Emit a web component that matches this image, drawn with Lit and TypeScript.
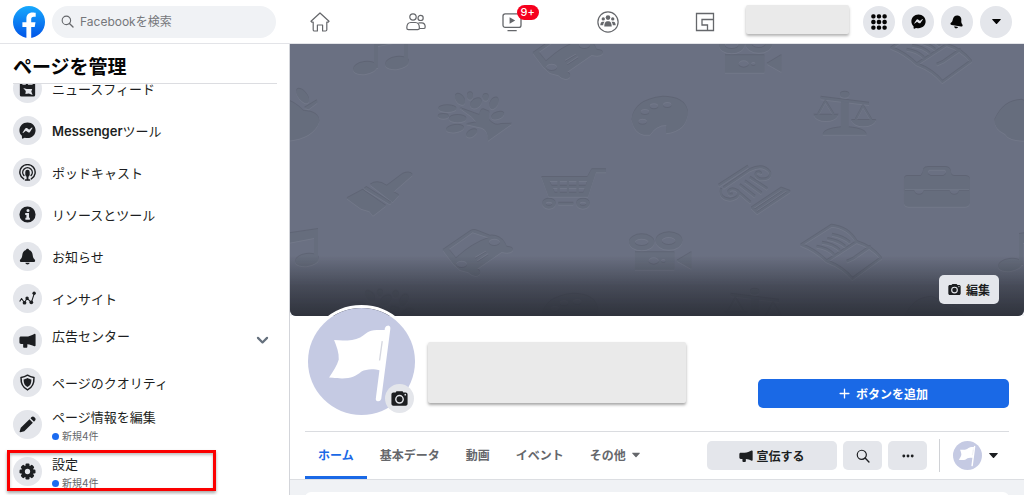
import { LitElement, html, svg, css, TemplateResult, SVGTemplateResult } from "lit";
import { customElement, property } from "lit/decorators.js";

/* Glyphs drawn on a 20 x 20 grid. */
const glyphs: Record<string, SVGTemplateResult> = {
  feed: svg`<path fill="currentColor" fill-rule="evenodd" d="M3 0h14a2 2 0 0 1 2 2v15.500a2 2 0 0 1-2 2H3a2 2 0 0 1-2-2V2a2 2 0 0 1 2-2zM4 2.500v3h4v-3zM10.500 2.500v3h5.500v-3zM5 9.500l4 1h6.500l-1 3 1.500 4-4.500-1.500-4 .5.5-3.500z"/>`,
  messenger: svg`<path fill="currentColor" fill-rule="evenodd" d="M10 .5C4.500.5.5 4.500.5 9.700c0 2.700 1.100 5 2.900 6.600l.1 2.600c0 .5.5.8 1 .6l2.200-1c1 .3 2.100.4 3.300.4 5.500 0 9.500-4 9.500-9.200S15.500.5 10 .5zM4.300 12.300l3-4.700c.5-.7 1.400-.9 2.100-.4l2.200 1.700c.2.1.4.1.6 0l3-2.300c.4-.3.9.2.6.6l-2.900 4.600c-.5.7-1.500.9-2.200.4l-2.300-1.700c-.2-.1-.4-.1-.6 0l-3 2.300c-.3.3-.8-.1-.5-.5z"/>`,
  podcast: svg`<g fill="none" stroke="currentColor" stroke-width="1.700" stroke-linecap="round"><path d="M5.500 17.500a9 9 0 1 1 9 0"/><path d="M5.800 13.600a5.600 5.600 0 1 1 8.400 0"/></g><rect x="7.400" y="6.800" width="5.200" height="8.200" rx="2.600" fill="currentColor"/><rect x="8.900" y="13" width="2.200" height="6" fill="currentColor"/><rect x="6.800" y="18" width="6.400" height="1.600" rx=".6" fill="currentColor"/>`,
  info: svg`<path fill="currentColor" fill-rule="evenodd" d="M10 .5a9.500 9.500 0 1 0 0 19 9.500 9.500 0 0 0 0-19zM10.600 3.400a1.800 1.800 0 1 1 0 3.600 1.800 1.800 0 0 1 0-3.600zM7.300 8.300h4.500v5.500h1v2.400H7.500v-2.400h1.200v-3.200H7.300z"/>`,
  bell: svg`<path fill="currentColor" d="M10 .8c1 0 1.800.7 1.900 1.500 2.800.9 4 3.400 4.200 6 .2 2.300.8 3.700 2.100 5 1.500 1.500.8 3.200-1.200 3.200H3c-2 0-2.700-1.700-1.200-3.200 1.300-1.300 1.900-2.700 2.100-5 .2-2.600 1.400-5.100 4.200-6C8.200 1.500 9 .8 10 .8zM7.500 17.400h5c-.2 1.200-1.200 2-2.500 2s-2.300-.8-2.500-2z"/>`,
  insight: svg`<path d="M.8 13.500 3 10 6.500 15 9.500 9.500l5 5.300L18 4" fill="none" stroke="currentColor" stroke-width="1.300" stroke-linejoin="round"/><g fill="currentColor"><circle cx="6.500" cy="15" r="2.200"/><circle cx="9.500" cy="9.500" r="2"/><circle cx="14.500" cy="14.500" r="2.200"/><circle cx="17.800" cy="3.800" r="2"/></g>`,
  horn: svg`<path fill="currentColor" d="M18 2.300c.8-.3 1.500.1 1.500.9v12.600c0 .8-.7 1.200-1.500.9-3-1.300-5-2.200-8.200-2.400v3c0 .8-.5 1.300-1.200 1.300H6.100c-.7 0-1.200-.5-1.200-1.300v-3.100H2.500c-1.200 0-2-.8-2-2V7.400c0-1.200.8-2 2-2H8c4 0 6.600-1.500 10-3.100z"/>`,
  shield: svg`<path d="M10 1.400c2.400 1.500 4.700 2.300 7.600 2.600.3 7.200-1.600 11.900-7.600 14.700C4 15.900 2.100 11.200 2.400 4c2.900-.3 5.200-1.100 7.600-2.600z" fill="none" stroke="currentColor" stroke-width="1.800" stroke-linejoin="round"/><path fill="currentColor" d="M10 4.800c1.500.9 2.800 1.300 4.600 1.600 0 4.500-1.100 7.100-4.600 9-3.500-1.900-4.600-4.500-4.600-9 1.800-.3 3.100-.7 4.600-1.600z"/>`,
  pencil: svg`<path fill="currentColor" d="M12.300 3.800l4 4L6.200 17.900 1.600 19.200c-.6.100-1-.3-.9-.9l1.400-4.400zM13.500 2.600l1.300-1.300c.9-.9 2.200-.9 3 0l1.100 1.100c.9.900.8 2.100 0 3l-1.300 1.300z"/>`,
  gear: svg`<g fill="currentColor"><rect x="7.600" y=".6" width="4.800" height="18.800" rx="1.400"/><rect x="7.600" y=".6" width="4.800" height="18.800" rx="1.400" transform="rotate(45 10 10)"/><rect x="7.600" y=".6" width="4.800" height="18.800" rx="1.400" transform="rotate(90 10 10)"/><rect x="7.600" y=".6" width="4.800" height="18.800" rx="1.400" transform="rotate(135 10 10)"/><circle cx="10" cy="10" r="7.200"/></g><circle cx="10" cy="10" r="3.100" fill="#e4e6eb"/>`,
  camera: svg`<path fill="currentColor" fill-rule="evenodd" d="M7.300 1.500h5.400c1 0 1.400.4 1.800 1.400h2.700c1.300 0 2.300 1 2.300 2.300v11c0 1.300-1 2.300-2.300 2.300H2.800C1.500 18.500.5 17.500.5 16.200v-11c0-1.300 1-2.300 2.300-2.300h2.700c.4-1 .8-1.400 1.800-1.400zM10 5.700a5.200 5.200 0 1 0 0 10.400 5.200 5.200 0 0 0 0-10.400zm6.800-1.200a1 1 0 1 0 0 2 1 1 0 0 0 0-2z"/><circle cx="10" cy="10.900" r="3.500" fill="currentColor"/>`,
  lens: svg`<circle cx="8.300" cy="8.300" r="6.500" fill="none" stroke="currentColor" stroke-width="1.700"/><path d="M13 13l5.500 5.500" stroke="currentColor" stroke-width="2" stroke-linecap="round"/>`,
  dots: svg`<g fill="currentColor"><circle cx="3" cy="10" r="2.400"/><circle cx="10" cy="10" r="2.400"/><circle cx="17" cy="10" r="2.400"/></g>`,
  caret: svg`<path fill="currentColor" d="M1.500 4.500h17c1 0 1.400 1 .7 1.800l-8 8.600c-.7.8-1.700.8-2.400 0l-8-8.600C.1 5.500.5 4.500 1.500 4.500z"/>`,
  chevron: svg`<path d="M3 6l7 7 7-7" fill="none" stroke="currentColor" stroke-width="3.400" stroke-linecap="round" stroke-linejoin="round"/>`,
  plus: svg`<path d="M10 2v16M2 10h16" stroke="currentColor" stroke-width="2.400" stroke-linecap="round"/>`,
  grid: svg`<g fill="currentColor">${[3, 10, 17].map((y) => [3, 10, 17].map((x) => svg`<rect x=${x - 2.7} y=${y - 2.7} width="5.400" height="5.400" rx="2.200"/>`))}</g>`,
  tiltbell: svg`<g transform="rotate(10 10 10)"><path fill="currentColor" d="M9.500.6c4 0 6 2.900 6.200 6.200.2 2.300.6 3.600 2.200 5.200 1.600 1.700.9 3.400-1.100 3.400H3.200c-2 0-2.700-1.700-1.200-3.200 1.300-1.300 1.400-2.800 1.500-5C3.700 3.500 5.700.6 9.500.6zM7.200 16.600h5.600c-.3 1.500-1.400 2.600-2.800 2.600s-2.500-1.100-2.800-2.600z"/></g>`,
  home: svg`<path d="M1 9.300 10 1l9 8.300-.8.9h-1.400v7.600c0 .6-.5 1.200-1.200 1.200h-3v-6H7.400v6h-3c-.7 0-1.200-.6-1.200-1.200v-7.600H1.800z" fill="none" stroke="currentColor" stroke-width="1.200" stroke-linejoin="round"/>`,
  people: svg`<g fill="none" stroke="currentColor" stroke-width="1.200" stroke-linejoin="round"><circle cx="7" cy="5" r="3.200"/><circle cx="14.600" cy="5.900" r="2.600"/><path d="M.8 16c0-3.600 1.800-5.500 4-5.500h4.600c2.300 0 4 1.900 4 5.500 0 1-.6 1.700-1.700 1.700H2.500C1.400 17.700.8 17 .8 16z"/><path d="M12.500 10.800h3.200c2 0 3.500 1.600 3.500 4.100 0 1-.6 1.600-1.600 1.600h-4.300"/></g>`,
  watch: svg`<rect x="1" y="1.800" width="18" height="13.600" rx="2.200" fill="none" stroke="currentColor" stroke-width="1.300"/><path fill="currentColor" d="M7.600 5.200l5.600 3.300-5.600 3.300zM5.500 18h9.200v1.200H5.500z"/>`,
  groups: svg`<circle cx="10" cy="10" r="9.200" fill="none" stroke="currentColor" stroke-width="1.100"/><g fill="currentColor"><circle cx="10" cy="6" r="2.100"/><circle cx="5.700" cy="7.200" r="1.500"/><circle cx="14.300" cy="7.200" r="1.500"/><path d="M6.600 14.200c0-3 1-4.900 2.400-4.900h2c1.400 0 2.400 1.900 2.400 4.900zM3 13c0-2 .8-3.300 2-3.300h1.800C6 10.800 5.700 12 5.600 13zM17 13c0-2-.8-3.300-2-3.300h-1.800c.8 1.100 1.100 2.300 1.200 3.300z"/></g>`,
  gaming: svg`<path d="M1.500 1.500h17v17h-17zM18.500 7.500H7v5.500h5.500v5.500" fill="none" stroke="currentColor" stroke-width="1.300"/>`,
};

const icon = (name: string, size: number): TemplateResult =>
  html`<svg class="icon" viewBox="0 0 20 20" width=${size} height=${size} aria-hidden="true">${glyphs[name]}</svg>`;

const flag = (): TemplateResult => html`<svg class="flag" viewBox="0 0 320 320" aria-hidden="true">
  <circle cx="160" cy="160" r="160" fill="#c5cae3"></circle>
  <g fill="#fff">
    <path d="M78 96c30 2 56 2 78-8 18-10 24-24 56-22h20l-14 122c-26-8-44-4-58 2-24 20-40 24-97 18 12-18 24-36 29-54 1-20-6-38-14-58z"></path>
    <path d="M230 60q2-8 10-8 8 2 6 12l-27 208q-3 8-10 7-8-2-6-10z"></path>
  </g>
  <path d="M222 99l-8 58" stroke="#d5d7e0" stroke-width="4"></path>
</svg>`;

/* Embossed motifs of the default cover. */
const upperMotifs = () => svg`
  <g>
    <path d="M84-7L118-12V20h-4V-3L88 2v22h-4z"/>
    <ellipse cx="75" cy="24" rx="12" ry="6" transform="rotate(-8 75 24)"/>
    <ellipse cx="107" cy="19" rx="12" ry="6" transform="rotate(-8 107 19)"/>
  </g>
  <g transform="translate(90 -201) scale(.3333)">
    <path fill-rule="evenodd" d="M458 630L540 574Q550 568 562 572L600 587Q630 585 645 610L650 620Q672 622 668 632 660 642 635 636L560 688Q576 694 568 704 553 714 535 697L510 690 490 672zM476 628L498 655Q545 610 598 593L548 577zM498 673a17 11 0 1 0 34 0a17 11 0 1 0-34 0M596 607a17 11 0 1 0 34 0a17 11 0 1 0-34 0M553 652L587 632 590 636 556 656zM560 662L594 640 597 644 563 666z"/>
  </g>
  <g transform="translate(370 -4) scale(.3333)">
    <path fill-rule="evenodd" d="M195 46H313V98H195zM235 72a16 11 0 1 0 32 0a16 11 0 1 0-32 0M273 72a7 6 0 1 0 14 0a7 6 0 1 0-14 0M320 71L364 45V96zM177 16a38 24 0 1 0 76 0a38 24 0 1 0-76 0M194 16a21 11 0 1 0 42 0a21 11 0 1 0-42 0M257 12a40 26 0 1 0 80 0a40 26 0 1 0-80 0M275 12a21 12 0 1 0 42 0a21 12 0 1 0-42 0"/>
  </g>
  <g transform="translate(460 -201) scale(.3333)" fill="none" stroke="#666d7d" stroke-width="6" stroke-linejoin="round">
    <path d="M424 615L515 557Q565 562 590 606L500 664Q465 630 424 615zM590 606Q635 620 663 655L577 717Q548 682 500 664M470 620Q505 625 522 645M486 608Q520 612 540 632M502 597Q535 602 556 620M516 584Q550 590 570 608M560 665L580 656 632 620"/>
  </g>
  <g transform="translate(0 -4) scale(.3333)">
    <path d="M508 203L568 225Q570 208 580 208L598 215 597 240Q615 260 633 252L666 251 594 302Q595 270 575 263L528 253 560 247 545 230z"/>
    <ellipse cx="472" cy="206" rx="27" ry="10"/><ellipse cx="460" cy="229" rx="16" ry="7"/>
    <ellipse cx="503" cy="236" rx="26" ry="11"/><ellipse cx="495" cy="266" rx="27" ry="11" transform="rotate(-8 495 266)"/>
    <ellipse cx="545" cy="280" rx="18" ry="10" transform="rotate(-30 545 280)"/><ellipse cx="510" cy="178" rx="12" ry="19" transform="rotate(-40 510 178)"/>
    <ellipse cx="540" cy="168" rx="9" ry="11"/><ellipse cx="558" cy="190" rx="19" ry="13" transform="rotate(-35 558 190)"/>
    <ellipse cx="587" cy="172" rx="9" ry="10"/><ellipse cx="612" cy="190" rx="12" ry="19" transform="rotate(30 612 190)"/>
    <ellipse cx="623" cy="227" rx="20" ry="10" transform="rotate(-20 623 227)"/>
    <path fill-rule="evenodd" d="M1194 215Q1185 170 1118 170 1030 180 1025 240 1035 290 1080 284 1098 255 1130 255L1128 280Q1192 272 1194 215zM1052 216a13 9 0 1 0 26 0a13 9 0 1 0-26 0M1079 199a13 9 0 1 0 26 0a13 9 0 1 0-26 0M1045 245a13 9 0 1 0 26 0a13 9 0 1 0-26 0M1119 195a13 9 0 1 0 26 0a13 9 0 1 0-26 0"/>
  </g>
  <g transform="translate(370 -4) scale(.3333)">
    <path d="M543 180H566V262Q615 266 620 284H488Q494 266 543 262z"/>
    <ellipse cx="554" cy="164" rx="14" ry="9"/>
    <path d="M482 170L627 188V195L482 178z"/>
    <path d="M460 224H536Q526 243 497 243 470 243 460 224zM573 240H649Q639 259 610 259 583 259 573 240z"/>
    <path d="M474 224L496 184 521 224M587 240L609 198 634 240" fill="none" stroke="#666d7d" stroke-width="5"/>
  </g>`;

const apple = (dx: number) => svg`
  <g transform="translate(${dx} -4) scale(.3333)">
    <path d="M-92 240Q-65 180-10 179 20 190 40 212 88 215 88 245 70 295-8 302-50 300-60 282-92 268-92 240z"/>
    <ellipse cx="38" cy="168" rx="13" ry="26" transform="rotate(-40 38 168)"/>
    <path d="M42 204L80 181 82 188 56 208z"/>
  </g>`;

const coverArt = (): TemplateResult => html`<svg class="art" viewBox="0 0 734 272" preserveAspectRatio="xMidYMid slice" aria-hidden="true">
  ${svg`<g class="emboss" fill="#666d7d">
    ${upperMotifs()}${apple(0)}${apple(735)}
    <g transform="translate(-90 197)">${upperMotifs()}${apple(735)}</g>
    <g transform="translate(645 197)"><path d="M84-7L118-12V20h-4V-3L88 2v22h-4z"/><ellipse cx="75" cy="24" rx="12" ry="6" transform="rotate(-8 75 24)"/></g>
    <g transform="translate(0 -4) scale(.3333)">
      <path d="M240 434Q262 418 290 437L338 401Q362 392 368 405L310 456 327 466 308 487zM229 441L305 488 299 493 222 446zM170 475L218 449 288 497 249 527 238 514 213 506 188 488z"/>
      <path fill-rule="evenodd" d="M754 411H892L905 388H948V397H918L894 470H776zM778 423L785 437H803V423zM809 423V437H831V423zM837 423V437H860V423zM866 423V437H887L892 423zM788 444L794 458H803V444zM809 444V458H831V444zM837 444V458H860V444zM866 444V458H880L885 444zM757 491a20 15 0 1 0 40 0a20 15 0 1 0-40 0M767 491a10 6 0 1 0 20 0a10 6 0 1 0-20 0M859 491a20 15 0 1 0 40 0a20 15 0 1 0-40 0M869 491a10 6 0 1 0 20 0a10 6 0 1 0-20 0M805 488H850V494H805z"/>
    </g>
    <g transform="translate(370 -4) scale(.3333)">
      <path fill="none" stroke="#666d7d" stroke-width="6" stroke-linejoin="round" d="M176 437L264 380M184 447Q175 475 210 479 240 475 235 455 215 440 205 455 205 467 218 463M190 444L270 390Q310 370 330 398 335 420 300 418 280 408 290 398 300 395 304 402M240 435L285 470M255 424L305 460M270 413L322 447M230 452L272 488M276 504L364 446 388 455 292 519zM284 512L376 450"/>
      <path fill-rule="evenodd" d="M742 408H782Q790 400 790 388 794 381 805 381H855Q870 382 872 392 872 408 884 408H918Q930 410 930 420V488Q928 500 915 500H745Q732 498 732 488V420Q732 408 742 408zM808 389Q802 392 803 402L812 408H850L858 402Q860 392 854 389zM734 448V453H763Q765 464 777 464 790 464 791 453H869Q871 464 883 464 895 464 897 453H927V448z"/>
    </g>
  </g>`}
</svg>`;

const base = css`
  *, *::before, *::after { box-sizing: border-box; }
  :host { display: block; font-family: Inter, "Noto Sans CJK JP", sans-serif; color: #1c1e21; }
  svg { display: block; flex: none; }
  button { font: inherit; color: inherit; border: 0; padding: 0; margin: 0; cursor: pointer; }
  a { color: inherit; text-decoration: none; }
  .round { display: flex; align-items: center; justify-content: center; flex: none; border-radius: 50%; background: #e4e6eb; }
`;

@customElement("top-bar")
class TopBar extends LitElement {
  static styles = [base, css`
    .bar { display: flex; align-items: center; height: 44px; padding: 0 12px 0 13px; background: #fff; border-bottom: 1px solid #e3e4e8; }
    .logo { margin-right: 7px; }
    .search { display: flex; align-items: center; gap: 6px; flex: 0 1 224px; min-width: 120px; height: 32px; padding: 0 9px; border-radius: 16px; background: #f0f2f5; color: #65676b; }
    .search input { flex: 1; min-width: 0; border: 0; padding: 0; outline: 0; background: none; font: inherit; font-size: 12px; color: #1c1e21; }
    .search input::placeholder { color: #75777b; opacity: 1; }
    nav { display: flex; flex: 1; justify-content: space-between; align-items: center; padding: 0 31px 0 34px; color: #65676b; }
    nav a { position: relative; }
    .count { position: absolute; left: 15px; top: -7px; padding: 0 4px; border-radius: 8px; background: #f6001d; color: #fff; font-size: 11px; line-height: 15px; font-weight: 500; }
    .blank { flex: none; width: 103px; height: 29px; margin: 0 14px 4px 0; background: #eaeaea; border-radius: 2px; box-shadow: 0 2px 3px rgba(0, 0, 0, 0.3); }
    .actions { display: flex; gap: 7px; color: #050505; }
    .round { width: 32px; height: 32px; }
  `];

  render() {
    const tabs = [["home", "ホーム"], ["people", "友達"], ["watch", "Watch"], ["groups", "グループ"], ["gaming", "ゲーム"]];
    const actions: [string, string, number][] = [["grid", "メニュー", 16], ["messenger", "Messenger", 15], ["tiltbell", "お知らせ", 14], ["caret", "アカウント", 9]];
    return html`<header class="bar">
      <a class="logo" href="#" aria-label="Facebook">
        <svg viewBox="0 0 32 32" width="32" height="32">
          <defs><linearGradient id="blue" x1="0" y1="0" x2="0" y2="1"><stop offset="0" stop-color="#17a9fd"></stop><stop offset="1" stop-color="#0154e8"></stop></linearGradient></defs>
          <circle cx="16" cy="16" r="16" fill="url(#blue)"></circle>
          <path fill="#fff" d="M13.400 32V21H9.400v-4.800h4v-3.500c0-4 2.400-6.200 6-6.200 1.700 0 3.300.3 3.300.3v4h-1.900c-2 0-2.600 1.200-2.600 2.500v2.900h4.300l-.8 4.800h-3.500v11a16 16 0 0 1-4.800 0z"></path>
        </svg>
      </a>
      <label class="search">${icon("lens", 13)}<input type="search" placeholder="Facebookを検索" aria-label="Facebookを検索" /></label>
      <nav>${tabs.map(([name, label]) => html`<a href="#" aria-label=${label}>${icon(name, name === "groups" ? 22 : 20)}${name === "watch" ? html`<span class="count">9+</span>` : ""}</a>`)}</nav>
      <div class="blank"></div>
      <div class="actions">${actions.map(([name, label, size]) => html`<button class="round" aria-label=${label}>${icon(name, size)}</button>`)}</div>
    </header>`;
  }
}

interface Entry { glyph: string; label: string; brand?: string; note?: string; open?: boolean; marked?: boolean; }

@customElement("side-menu")
class SideMenu extends LitElement {
  @property({ attribute: false }) entries: Entry[] = [];

  static styles = [base, css`
    :host { display: flex; flex-direction: column; min-height: 0; padding: 0 12px 0 13px; background: #fff; border-right: 1px solid #d3d5da; }
    h1 { flex: none; margin: 0; padding: 12px 0 3px; font-size: 19px; line-height: 24px; font-weight: 700; color: #050505; border-bottom: 1px solid #dcdde1; }
    .clip { flex: 1; min-height: 0; overflow: hidden; margin: 0 -12px 0 -13px; padding: 0 12px 0 13px; }
    ul { list-style: none; margin: -16px 0 0; padding: 0; }
    .entry { position: relative; display: flex; align-items: center; gap: 10px; padding: 6px 8px 7px 0; }
    .round { width: 29px; height: 29px; color: #1c1e21; }
    .text { flex: 1; font-size: 13px; line-height: 20px; font-weight: 400; }
    .text b { font-weight: 600; }
    .open .text { align-self: flex-start; }
    .noted { align-items: flex-start; padding-bottom: 8px; }
    .noted .text { line-height: 14px; }
    .note { display: flex; align-items: center; gap: 3px; margin-top: 5px; font-size: 10px; color: #65676b; }
    .note::before { content: ""; width: 7px; height: 7px; border-radius: 50%; background: #1b6bf0; }
    .marked::after { content: ""; position: absolute; left: -6px; top: -1px; width: 209px; height: 41px; border: 3px solid #fb0000; box-shadow: 0 2px 3px rgba(0, 0, 0, 0.35), inset 0 2px 3px rgba(0, 0, 0, 0.25); pointer-events: none; }
    .chev { color: #65707d; }
  `];

  render() {
    return html`<h1>ページを管理</h1>
      <div class="clip"><ul>${this.entries.map((e) => html`<li>
        <a href="#" class="entry ${e.note ? "noted" : ""} ${e.open ? "open" : ""} ${e.marked ? "marked" : ""}">
          <span class="round">${icon(e.glyph, 17)}</span>
          <span class="text">${e.brand ? html`<b>${e.brand}</b>` : ""}${e.label}${e.note ? html`<span class="note">${e.note}</span>` : ""}</span>
          ${e.open ? html`<span class="chev">${icon("chevron", 13)}</span>` : ""}
        </a></li>`)}</ul></div>`;
  }
}

@customElement("page-profile")
class PageProfile extends LitElement {
  static styles = [base, css`
    :host { min-width: 0; background: #f0f2f5; overflow: hidden; }
    .cover { position: relative; height: 272px; overflow: hidden; border-radius: 0 0 6px 6px; background: #6a7082; }
    .art { width: 100%; height: 100%; }
    .emboss { filter: drop-shadow(0 1px 0 rgba(255, 255, 255, 0.06)) drop-shadow(0 -1px 0 rgba(0, 0, 0, 0.1)); }
    .cover::after { content: ""; position: absolute; inset: 212px 0 0; background: linear-gradient(rgba(42, 45, 54, 0), rgba(42, 45, 54, 0.55) 50%, rgba(42, 45, 54, 0.92)); }
    .edit { position: absolute; z-index: 1; right: 25px; bottom: 12px; display: flex; align-items: center; gap: 5px; height: 29px; padding: 0 9px; border-radius: 5px; background: #e4e6eb; font-size: 12px; font-weight: 700; }
    .head { background: #fff; padding: 0 15px; border-bottom: 1px solid #dcdee2; }
    .identity { display: flex; height: 115px; align-items: flex-start; }
    .avatar { position: relative; z-index: 2; flex: none; width: 113px; height: 113px; margin-top: -11px; border: 3px solid #fff; border-radius: 50%; }
    .avatar .flag { width: 107px; height: 107px; }
    .snap { position: absolute; right: 1px; bottom: 2px; width: 29px; height: 29px; }
    .blank { flex: 0 1 258px; height: 61px; margin: 26px 0 0 10px; background: #eaeaea; border-radius: 2px; box-shadow: 0 2px 3px rgba(0, 0, 0, 0.35); }
    .add { display: flex; align-items: center; justify-content: center; gap: 6px; flex: none; width: 251px; height: 29px; margin: 63px 0 0 auto; border-radius: 5px; background: #1a69e6; color: #fff; font-size: 12px; font-weight: 700; }
    .tools { display: flex; justify-content: space-between; height: 48px; border-top: 1px solid #dadce0; }
    .tabs { display: flex; font-size: 12px; font-weight: 700; color: #65676b; }
    .tabs a { display: flex; align-items: center; gap: 6px; padding: 1px 13px 0; border-bottom: 3px solid transparent; white-space: nowrap; }
    .tabs .on { color: #1a69e6; border-color: #1a69e6; }
    .acts { display: flex; align-items: center; gap: 6px; }
    .acts button { display: flex; align-items: center; justify-content: center; gap: 3px; width: 39px; height: 29px; border-radius: 5px; background: #e4e6eb; font-size: 12px; font-weight: 700; }
    .acts .wide { width: 130px; }
    .acts .who { width: auto; gap: 7px; margin-left: 6px; padding: 0 11px 0 13px; border-left: 1px solid #d0d2d6; border-radius: 0; background: none; height: 33px; }
    .who .flag { width: 29px; height: 29px; }
    .card { height: 60px; margin: 12px 15px 0; border-radius: 6px; background: #fff; }
  `];

  render() {
    return html`
      <div class="cover">${coverArt()}<button class="edit">${icon("camera", 13)}編集</button></div>
      <section class="head">
        <div class="identity">
          <div class="avatar">${flag()}<button class="round snap" aria-label="写真を変更">${icon("camera", 17)}</button></div>
          <div class="blank"></div>
          <button class="add">${icon("plus", 11)}ボタンを追加</button>
        </div>
        <div class="tools">
          <nav class="tabs">
            <a class="on" href="#">ホーム</a><a href="#">基本データ</a><a href="#">動画</a><a href="#">イベント</a><a href="#">その他${icon("caret", 8)}</a>
          </nav>
          <div class="acts">
            <button class="wide">${icon("horn", 14)}宣伝する</button>
            <button aria-label="検索">${icon("lens", 14)}</button>
            <button aria-label="もっと見る">${icon("dots", 12)}</button>
            <button class="who" aria-label="ページを切り替え">${flag()}${icon("caret", 9)}</button>
          </div>
        </div>
      </section>
      <div class="card"></div>`;
  }
}

@customElement("app-root")
class AppRoot extends LitElement {
  static styles = [base, css`
    :host { height: 100vh; overflow: hidden; }
    .shell { display: grid; grid-template: auto minmax(0, 1fr) / 290px minmax(0, 1fr); height: 100%; }
    top-bar { grid-column: 1 / -1; }
  `];

  private entries: Entry[] = [
    { glyph: "feed", label: "ニュースフィード" },
    { glyph: "messenger", brand: "Messenger", label: "ツール" },
    { glyph: "podcast", label: "ポッドキャスト" },
    { glyph: "info", label: "リソースとツール" },
    { glyph: "bell", label: "お知らせ" },
    { glyph: "insight", label: "インサイト" },
    { glyph: "horn", label: "広告センター", open: true },
    { glyph: "shield", label: "ページのクオリティ" },
    { glyph: "pencil", label: "ページ情報を編集", note: "新規4件" },
    { glyph: "gear", label: "設定", note: "新規4件", marked: true },
  ];

  render() {
    return html`<div class="shell"><top-bar></top-bar><side-menu .entries=${this.entries}></side-menu><page-profile></page-profile></div>`;
  }
}
